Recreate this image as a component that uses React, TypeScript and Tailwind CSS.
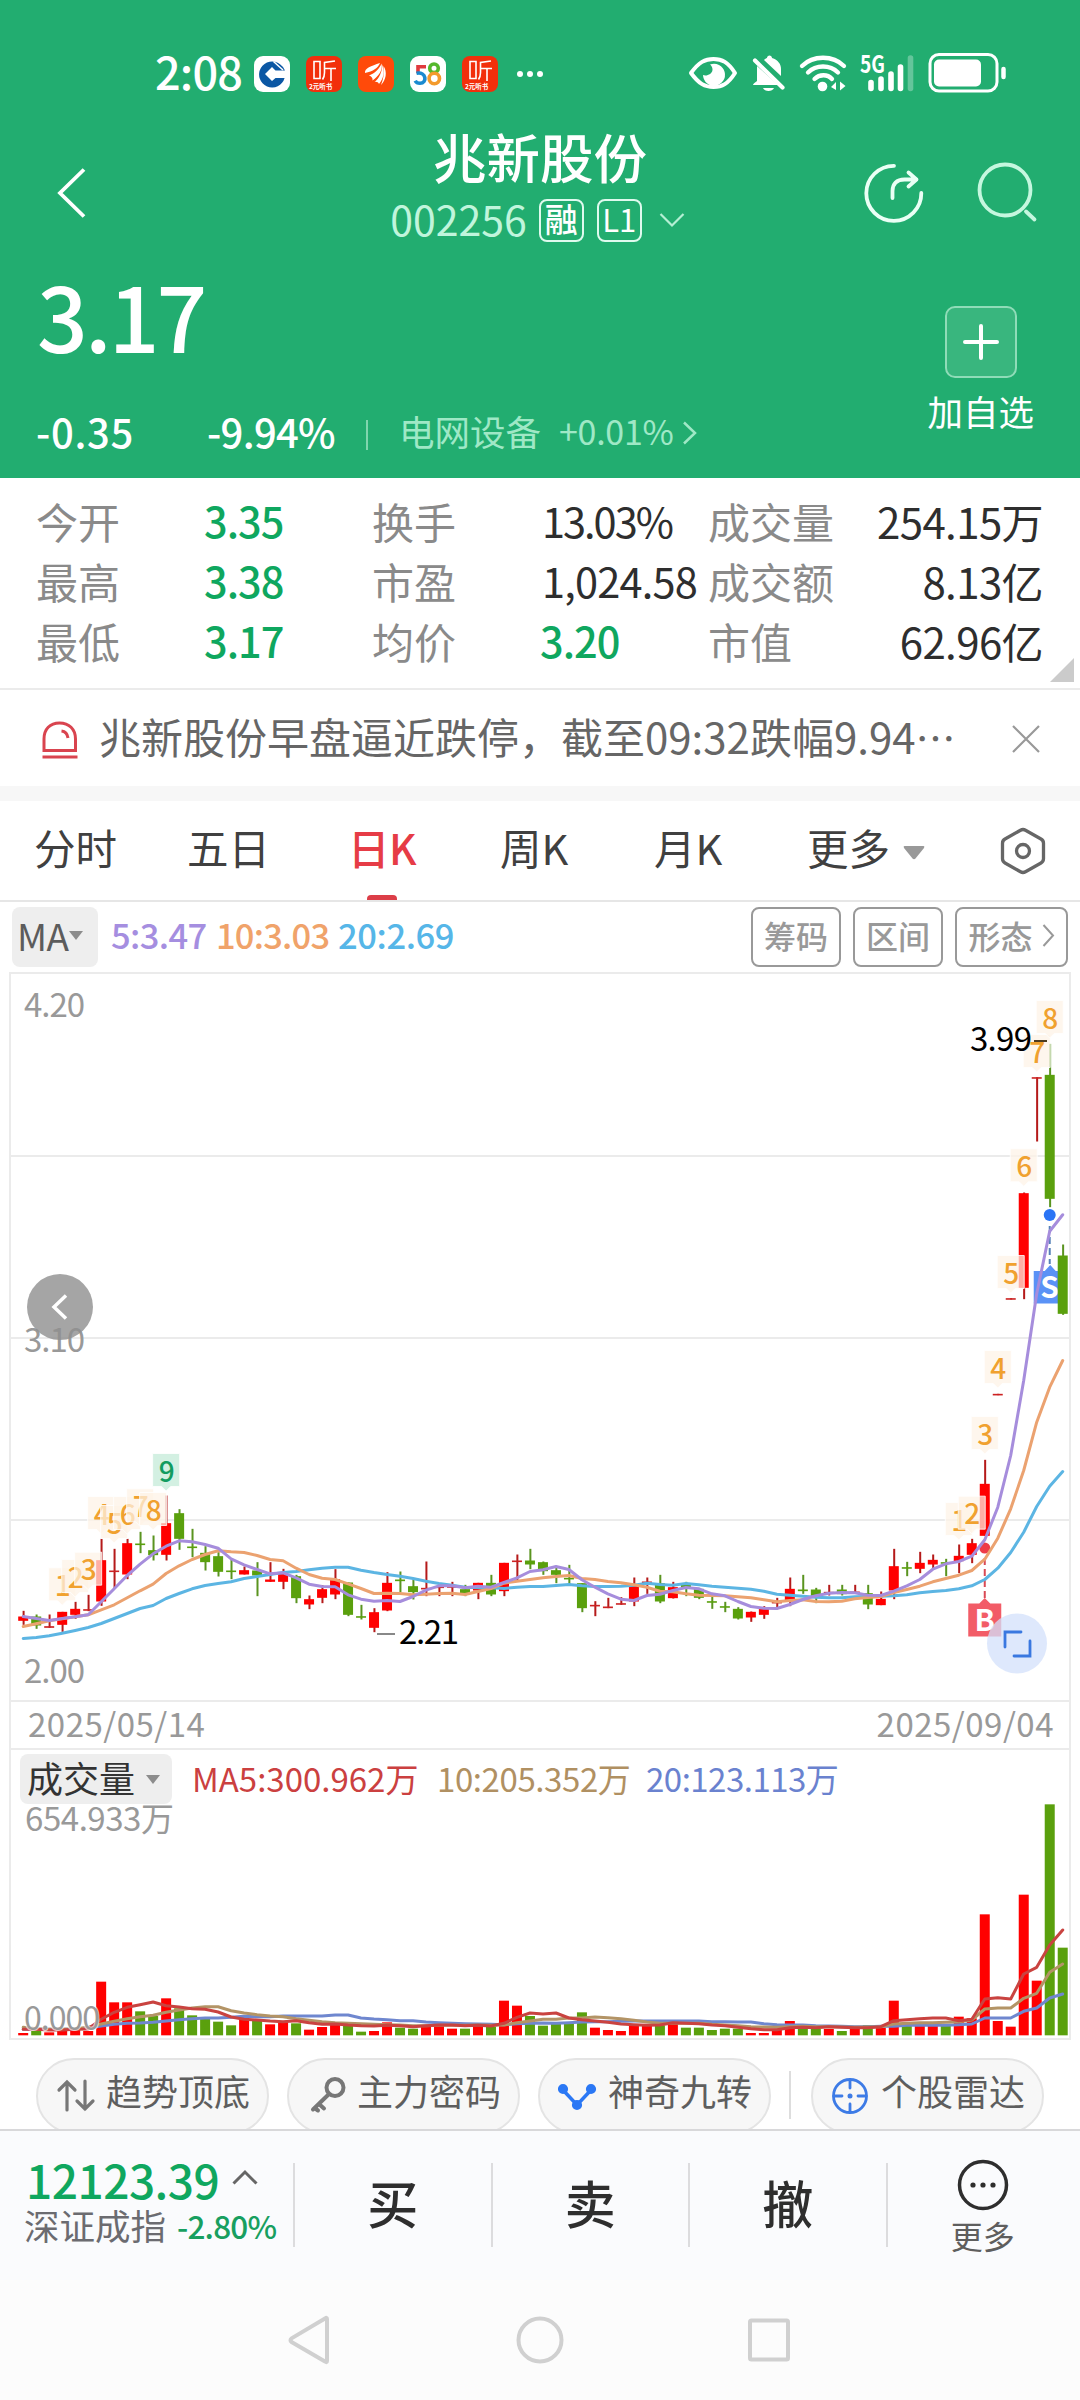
import type { ReactNode } from 'react';

const UP = '#ff0000';
const DOWN = '#5aa00d';
const STEP = 12.994;
const FIRST_X = 23.2;

const xAt = (i: number) => FIRST_X + i * STEP;
const priceY = (v: number) => 1380.5 + v / 3;
const volumeY = (v: number) => 1740 + v / 3;

// [up, high, low, body top, body bottom]
const candles: number[][] = [
  [1, 691, 733, 708, 721], [0, 702, 745, 708, 735], [1, 702, 742, 737, 742], [1, 694, 754, 694, 733],
  [1, 664, 715, 685, 703], [1, 643, 692, 686, 690], [1, 475, 676, 539, 663], [1, 505, 625, 570, 574],
  [1, 475, 596, 488, 582], [0, 454, 518, 489, 493], [0, 465, 540, 509, 524], [1, 345, 540, 428, 523],
  [0, 386, 508, 398, 475], [0, 445, 530, 498, 502], [0, 497, 570, 517, 545], [0, 515, 588, 527, 574],
  [0, 538, 596, 570, 574], [1, 558, 582, 569, 582], [0, 545, 647, 570, 585], [1, 545, 604, 597, 604],
  [1, 565, 626, 577, 604], [0, 583, 668, 587, 653], [1, 645, 686, 656, 672], [1, 614, 668, 626, 652],
  [1, 566, 656, 596, 642], [0, 606, 707, 606, 703], [0, 673, 717, 707, 711], [1, 683, 755, 695, 742],
  [1, 575, 692, 607, 690], [0, 573, 635, 597, 602], [0, 597, 657, 617, 635], [1, 543, 647, 622, 626],
  [1, 613, 647, 618, 621], [1, 604, 647, 617, 620], [0, 613, 647, 626, 638], [1, 607, 656, 607, 630],
  [0, 583, 647, 607, 642], [1, 547, 647, 547, 632], [1, 522, 604, 540, 544], [0, 505, 566, 540, 552],
  [0, 543, 583, 545, 572], [0, 558, 608, 569, 583], [0, 553, 612, 592, 596], [0, 608, 695, 608, 683],
  [1, 662, 707, 673, 677], [1, 652, 683, 678, 683], [1, 650, 673, 668, 672], [1, 591, 677, 614, 663],
  [1, 591, 640, 603, 608], [0, 583, 668, 608, 663], [1, 604, 654, 620, 653], [0, 604, 647, 612, 620],
  [0, 622, 656, 625, 652], [0, 645, 685, 662, 666], [0, 664, 695, 677, 681], [0, 680, 717, 685, 714],
  [1, 693, 724, 694, 711], [1, 677, 715, 681, 703], [1, 652, 684, 664, 667], [1, 591, 677, 625, 663],
  [0, 583, 640, 627, 632], [0, 622, 668, 627, 648], [1, 613, 645, 634, 638], [0, 613, 645, 627, 641],
  [1, 613, 640, 633, 637], [0, 613, 686, 638, 672], [1, 633, 674, 655, 674], [1, 505, 656, 557, 630],
  [0, 544, 587, 560, 564], [1, 514, 578, 547, 565], [1, 522, 563, 538, 552], [0, 535, 587, 545, 549],
  [1, 492, 578, 526, 542], [1, 475, 548, 488, 523], [1, 238, 466, 310, 466], [1, 40, 44, 40, 44],
  [1, -247, -243, -247, -243], [1, -564, -244, -562, -278], [1, -910, -717, -910, -906],
  [0, -1010, -520, -917, -545], [0, -408, -197, -375, -200],
];

const ma5 = [
  708, 714, 720, 714, 709, 703, 664, 625, 585, 551, 520, 497, 481, 484, 492, 503, 535, 553, 567, 580,
  577, 592, 611, 618, 619, 643, 656, 662, 660, 663, 648, 629, 616, 616, 622, 617, 620, 606, 592, 573,
  568, 558, 567, 598, 620, 640, 656, 660, 645, 641, 630, 621, 625, 640, 646, 663, 678, 683, 684, 672,
  657, 646, 638, 636, 637, 644, 645, 632, 616, 597, 566, 550, 543, 527, 478, 380, 225, 0, -260, -448, -497,
];
const ma10 = [
  738, 730, 721, 715, 709, 703, 688, 673, 652, 631, 611, 579, 556, 537, 522, 511, 514, 516, 525, 537,
  541, 563, 582, 593, 597, 610, 624, 639, 638, 639, 643, 641, 639, 638, 642, 633, 624, 608, 602, 597,
  592, 588, 585, 594, 597, 603, 607, 613, 620, 632, 634, 640, 644, 645, 646, 649, 652, 658, 664, 660,
  658, 663, 664, 662, 655, 651, 648, 636, 627, 617, 604, 594, 584, 570, 536, 473, 385, 270, 125, 20, -60,
];
const ma20 = [
  774, 771, 766, 758, 750, 741, 729, 714, 699, 684, 675, 654, 639, 625, 615, 609, 604, 594, 588, 582,
  576, 573, 568, 563, 560, 560, 569, 576, 582, 587, 594, 602, 609, 614, 620, 622, 622, 624, 620, 618,
  618, 615, 612, 616, 618, 618, 617, 614, 608, 612, 614, 609, 613, 617, 620, 623, 626, 632, 641, 644,
  647, 650, 652, 652, 649, 648, 647, 646, 643, 637, 633, 630, 625, 616, 597, 563, 516, 455, 378, 317, 273,
];

const volumes = [
  879, 873, 877, 870, 867, 873, 725, 787, 787, 814, 828, 775, 805, 826, 832, 845, 856, 840, 838, 853,
  847, 850, 869, 861, 852, 855, 875, 873, 847, 863, 866, 858, 856, 866, 866, 850, 860, 782, 797, 828,
  857, 848, 850, 817, 863, 870, 873, 852, 858, 856, 850, 863, 863, 870, 866, 866, 879, 879, 870, 843,
  866, 866, 867, 873, 867, 855, 863, 782, 855, 855, 853, 857, 830, 835, 523, 843, 860, 464, 722, 193, 623,
];
const vma5 = [
  868, 868, 870, 870, 868, 867, 838, 817, 802, 794, 786, 797, 801, 806, 808, 816, 831, 838, 840, 843,
  845, 842, 848, 853, 852, 855, 857, 858, 856, 857, 860, 857, 855, 855, 857, 856, 858, 850, 832, 819,
  822, 819, 834, 839, 843, 847, 852, 854, 856, 855, 848, 850, 851, 855, 857, 862, 866, 869, 869, 863,
  862, 863, 860, 862, 863, 863, 860, 842, 839, 836, 834, 834, 842, 838, 777, 773, 777, 702, 682, 615, 570,
];
const vma10 = [
  862, 866, 868, 868, 866, 862, 852, 844, 836, 830, 826, 817, 810, 804, 800, 800, 812, 819, 824, 828,
  830, 836, 841, 845, 848, 850, 851, 853, 854, 855, 857, 857, 856, 856, 856, 855, 856, 855, 848, 843,
  838, 838, 834, 834, 831, 833, 836, 841, 846, 850, 850, 850, 850, 853, 855, 857, 860, 861, 862, 860,
  859, 860, 860, 861, 862, 861, 860, 852, 850, 848, 848, 847, 845, 840, 807, 804, 804, 775, 760, 697, 672,
];
const vma20 = [
  868, 868, 868, 868, 867, 864, 858, 853, 850, 849, 847, 843, 839, 836, 834, 834, 832, 829, 830, 830,
  828, 828, 828, 828, 825, 825, 834, 837, 839, 842, 842, 846, 848, 850, 851, 852, 853, 854, 851, 850,
  849, 850, 848, 846, 845, 845, 844, 843, 843, 843, 843, 843, 843, 845, 845, 846, 846, 851, 854, 855,
  855, 857, 858, 859, 860, 860, 859, 859, 856, 856, 856, 856, 854, 852, 834, 834, 834, 814, 804, 774, 762,
];

// sequence marks: [candle index, top, digit]
const marks: number[][] = [
  [3, 562, 1], [4, 537, 2], [5, 515, 3], [6, 348, 4], [7, 375, 5], [8, 348, 6], [9, 325, 7], [10, 336, 8],
  [72, 366, 1], [73, 347, 2], [74, 108, 3], [75, -90, 4], [76, -375, 5], [77, -695, 6], [78, -1038, 7], [79, -1140, 8],
];

function Line({ data, y, color }: { data: number[]; y: (v: number) => number; color: string }) {
  const points = data.map((v, i) => `${xAt(i).toFixed(1)},${y(v).toFixed(1)}`).join(' ');
  return <polyline points={points} fill="none" stroke={color} strokeWidth="3" strokeLinejoin="round" strokeLinecap="round" />;
}

function Candle({ row, i }: { row: number[]; i: number }) {
  const [up, high, low, top, bottom] = row;
  const x = xAt(i);
  const thin = bottom - top <= 6;
  return (
    <g>
      <rect x={x - 0.6} y={priceY(high)} width="2" height={(low - high) / 3} fill={up ? '#b51a1a' : '#5a9420'} />
      <rect
        x={x - 5}
        y={priceY(top)}
        width="10"
        height={Math.max((bottom - top) / 3, 1.6)}
        fill={up ? (thin ? '#cc2222' : UP) : DOWN}
      />
    </g>
  );
}

function Mark({ x, y, label, green }: { x: number; y: number; label: number; green?: boolean }) {
  return (
    <g>
      <path
        d={`M${x - 13.5} ${y}h27v33h-9l-4.5 4.5l-4.5 -4.5h-9z`}
        fill={green ? '#d3f0e2' : '#fef3e6'}
        fillOpacity={green ? 1 : 0.72}
        stroke="#fff"
        strokeWidth="1"
        strokeOpacity="0.8"
      />
      <text x={x + 0.5} y={y + 28} fontSize="28" fontWeight="500" textAnchor="middle" fill={green ? '#129c60' : '#f0a12f'}>
        {label}
      </text>
    </g>
  );
}

function StatusBar() {
  return (
    <div className="flex h-[104px] items-start pt-[50px]">
      <span className="ml-[155px] mt-[-2px] w-[99px] text-[45px] font-medium leading-[46px] tracking-[-0.8px]">2:08</span>
      <div className="mt-[6px] flex items-center gap-4">
        <svg width="36" height="36" viewBox="0 0 36 36">
          <rect width="36" height="36" rx="9" fill="#fff" />
          <path d="M26 8.200A13 13 0 1 0 30.600 22H21.500l-3.500 3-7-7 7-7 3.500 3.500H31A13 13 0 0 0 26 8.200z" fill="#0b57a4" />
          <path d="M19.500 5.500l9.500 8.500" stroke="#fff" strokeWidth="1.500" />
        </svg>
        <ListenIcon />
        <svg width="36" height="36" viewBox="0 0 36 36">
          <rect width="36" height="36" rx="8" fill="#ff4a0a" />
          <path
            d="M7 17C6.500 12 13 10 22 7c-2 5-7 8.500-15 10zM11 19.500c6-2.500 10-6 12.500-12C25 14 21 20 14.500 24.500 15 22 13.500 20.500 11 19.500zM16.500 26c5-4 7.500-10 8-17.500 2 7 1.500 14-3.500 19.500-.5-1.500-2.500-2.500-4.500-2zM23 29c2-5 3.500-11 2.500-19 4 6 2.500 14-2.500 19z"
            fill="#fff"
          />
        </svg>
        <svg width="36" height="36" viewBox="0 0 36 36" fill="none" strokeWidth="3.600">
          <rect width="36" height="36" rx="9" fill="#fff" />
          <path d="M16 10.800H8v6.500" stroke="#e03a3e" />
          <path d="M6.500 17.300c10-2 11 10 3.500 10-2.500 0-4-1-4.800-2.600" stroke="#1a8ad0" />
          <circle cx="24" cy="12.300" r="4.300" stroke="#54b82c" />
          <circle cx="24.300" cy="22.500" r="5.200" stroke="#f39a2b" />
        </svg>
        <ListenIcon />
      </div>
      <div className="ml-[19px] mt-[21px] flex gap-1">
        <i className="size-[6px] rounded-full bg-white" />
        <i className="size-[6px] rounded-full bg-white" />
        <i className="size-[6px] rounded-full bg-white" />
      </div>
      <svg className="ml-[144px] overflow-visible" width="324" height="46" viewBox="687 50 324 46" fill="none" stroke="#fff" strokeLinecap="round">
        <path d="M691 73C699 62 705 59 713.500 59S728 62 735 73C728 84 722 87 713.500 87S699 84 691 73z" strokeWidth="4" strokeLinejoin="round" />
        <path d="M710 64.500a11 11 0 1 1-7 10.500c3 1.500 9.500-.5 9.500-5.500 0-2-1-4-2.500-5z" fill="#fff" stroke="none" />
        <path d="M757 66L778 85H753c0-1.500 2.500-2.500 4-4zM764 60c1-1 2-2 3-2 0-3.500 5-3.500 5 0 6 2 9 6 9 11v7zM763 88h11c-1.500 4-9.500 4-11 0z" fill="#fff" stroke="none" />
        <path d="M755 60.500L782.500 87.500" strokeWidth="4.200" />
        <path d="M802 66c11-11 31-11 42 0M808 72.500c8-8 22-8 30 0M814.500 79c5-5 13-5 17.500 0" strokeWidth="4.300" />
        <circle cx="822.500" cy="86.500" r="4.800" fill="#fff" stroke="none" />
        <path d="M831 87l5-5v8zM840 81.500v9l5.500-4.500z" fill="#fff" stroke="none" />
        <text x="860" y="73" fontSize="24" fontWeight="700" fill="#fff" stroke="none" textLength="25" lengthAdjust="spacingAndGlyphs">5G</text>
        <path d="M871 82.500v6M881 79v9.500M891 74v14.500M900.500 67v21.500" strokeWidth="5.600" />
        <path d="M910.500 58v30.500" strokeWidth="5.600" strokeOpacity="0.3" />
        <rect x="930" y="54.500" width="67" height="36.500" rx="9" strokeWidth="3" />
        <rect x="934" y="59.500" width="47" height="27" rx="5" fill="#fff" stroke="none" />
        <path d="M1003.500 69v8" strokeWidth="4.500" />
      </svg>
    </div>
  );
}

function ListenIcon() {
  return (
    <svg width="36" height="36" viewBox="0 0 36 36">
      <rect width="36" height="36" rx="8" fill="#f22f0b" />
      <path d="M8 5.500h6v17H8zM29 5l-10.500 1.500v10c0 3-.5 5-2 7M18.500 12.500H30M25 12.500V25" fill="none" stroke="#fff" strokeWidth="1.600" />
      <text x="3" y="33" fontSize="6.500" fontWeight="700" fill="#fff">2元听书</text>
    </svg>
  );
}

function Header() {
  return (
    <header className="h-[478px] bg-[#22ad70] text-white">
      <StatusBar />
      <div className="grid h-[146px] grid-cols-[1fr_auto_1fr]">
        <svg className="ml-[54px] mt-[61px]" width="36" height="56" viewBox="0 0 36 56" fill="none" stroke="#fff" strokeWidth="3.800">
          <path d="M30 4.500L6 28l24 23.500" />
        </svg>
        <div className="flex flex-col items-center">
          <h1 className="mt-[25px] text-[53.5px] font-medium leading-[54px]">兆新股份</h1>
          <div className="mt-[15px] mr-[5px] flex h-[44px] items-center text-[#c0f5dc]">
            <span className="mt-[-4px] text-[41px] leading-[42px]">002256</span>
            <span className="ml-[12px] flex h-[43px] w-[45px] items-center justify-center rounded-lg border-2 border-[#dffaee] pb-1 text-[33px] font-medium leading-none text-white">融</span>
            <span className="ml-[13px] flex h-[43px] w-[45px] items-center justify-center rounded-lg border-2 border-[#dffaee] pb-1 text-[31px] leading-none text-white">L1</span>
            <svg className="ml-[17px]" width="26" height="18" viewBox="0 0 26 18" fill="none" stroke="#b5efd4" strokeWidth="2.200">
              <path d="M1.500 3L13 14.500 24.500 3" />
            </svg>
          </div>
        </div>
        <div className="flex justify-end">
          <svg className="mt-[55px]" width="220" height="66" viewBox="860 159 220 66" fill="none" stroke="#eafff5" strokeWidth="3.800" strokeLinecap="round" strokeLinejoin="round">
            <path d="M894 165.800A27.500 27.500 0 1 0 921.300 193" />
            <path d="M892.500 198v-7c0-7 4-11.500 12-11.500h12M908.500 172.500l8 7-8 7" />
            <g stroke="#c5f7df">
              <circle cx="1005" cy="190" r="25.500" />
              <path d="M1026 211.500l8.500 8" />
            </g>
          </svg>
        </div>
      </div>
      <div className="flex h-[228px] justify-between">
        <div className="pl-9">
          <div className="ml-px mt-[19px] text-[89px] font-medium leading-[91px] tracking-[-2.8px]">3.17</div>
          <div className="mt-[50px] flex h-[42px] items-center text-[40px] font-medium leading-none">
            <span className="w-[171px] tracking-[0.7px]">-0.35</span>
            <span className="w-[159px] tracking-[-0.7px]">-9.94%</span>
            <i className="mt-2 h-[30px] w-[2px] bg-[#7fd6ae]" />
            <span className="ml-[31px] text-[35.5px] font-normal text-[#9fe8c6]">电网设备</span>
            <span className="ml-[18px] text-[34px] font-normal tracking-[-0.3px] text-[#9fe8c6]">+0.01%</span>
            <svg className="ml-[9px] mt-1" width="16" height="24" viewBox="0 0 16 24" fill="none" stroke="#9fe8c6" strokeWidth="2.500">
              <path d="M2 1.500L13 12 2 22.500" />
            </svg>
          </div>
        </div>
        <div className="mr-[46px] mt-[56px] flex flex-col items-center">
          <span className="flex size-[72px] items-center justify-center rounded-[10px] border-2 border-[#8fdcb8] bg-[#39b67e]">
            <svg width="36" height="36" viewBox="0 0 36 36" stroke="#fff" strokeWidth="4" strokeLinecap="round">
              <path d="M18 2v32M2 18h32" />
            </svg>
          </span>
          <span className="mt-[15px] text-[35.5px] leading-[36px]">加自选</span>
        </div>
      </div>
    </header>
  );
}

const stats = [
  ['今开', '3.35', '换手', '13.03%', '成交量', '254.15万'],
  ['最高', '3.38', '市盈', '1,024.58', '成交额', '8.13亿'],
  ['最低', '3.17', '均价', '3.20', '市值', '62.96亿'],
];

function Stats() {
  return (
    <section className="relative h-[212px] border-b-2 border-[#ebebeb] bg-white pt-[13px]">
      {stats.map((row, i) => (
        <div key={row[0]} className="flex h-[60px] items-center pl-[36px] pr-[37px] text-[42px] leading-none text-[#8a8a8a]">
          <span className="w-[168px]">{row[0]}</span>
          <span className="w-[168px] text-[41.5px] font-medium tracking-[-1px] text-[#0fa75f]">{row[1]}</span>
          <span className="w-[168px]">{row[2]}</span>
          {i === 2 && <span className="w-[168px] text-[41.5px] font-medium tracking-[-1px] text-[#0fa75f]">{row[3]}</span>}
          {i === 1 && <span className="w-[168px] whitespace-nowrap pl-[2px] text-[41.5px] tracking-[-0.8px] text-[#2e2e2e]">{row[3]}</span>}
          {i === 0 && <span className="w-[168px] whitespace-nowrap pl-[2px] text-[41.5px] tracking-[-2px] text-[#2e2e2e]">{row[3]}</span>}
          <span>{row[4]}</span>
          <span className="ml-auto tracking-[-0.6px] text-[#2e2e2e]">{row[5]}</span>
        </div>
      ))}
      <svg className="absolute bottom-[6px] right-[6px]" width="24" height="24" viewBox="0 0 24 24">
        <path d="M24 0v24H0z" fill="#cbcbcb" />
      </svg>
    </section>
  );
}

function Alert() {
  return (
    <section className="flex h-[96px] items-center bg-white text-[#666]">
      <svg className="ml-[41px] mt-1" width="38" height="40" viewBox="0 0 38 40" fill="none" stroke="#d9444f" strokeWidth="3">
        <path d="M3 30.500V19C3 9 9 3 18.500 3S34.500 9 34.500 19v11.500z" />
        <path d="M20.500 11c4 .5 6 3 6.500 7M1.500 37h35" />
      </svg>
      <span className="ml-[20px] mt-[-4px] w-[880px] whitespace-nowrap text-[42px] leading-[50px]">
        兆新股份早盘逼近跌停，截至09:32跌幅9.94
        <span className="text-[40px]">⋯</span>
      </span>
      <svg className="ml-auto mr-[40px] mt-[2px]" width="28" height="28" viewBox="0 0 28 28" stroke="#999" strokeWidth="2.200">
        <path d="M1 1l26 26M27 1L1 27" />
      </svg>
    </section>
  );
}

function Tabs() {
  return (
    <nav className="flex h-[101px] items-center border-b-2 border-[#e6e6e6] bg-white pl-[34px] text-[41.5px] leading-none text-[#404040]">
      <span className="w-[153px] pb-[5px]">分时</span>
      <span className="w-[161px] pb-[5px]">五日</span>
      <span className="relative flex h-full w-[152px] items-center pb-[5px] font-medium tracking-[-0.5px] text-[#e63c46]">
        日K
        <i className="absolute bottom-0 left-[19px] h-[5px] w-[30px] rounded-t bg-[#dc3e48]" />
      </span>
      <span className="w-[154px] pb-[5px]">周K</span>
      <span className="w-[153px] pb-[5px]">月K</span>
      <span className="pb-[5px]">更多</span>
      <svg className="ml-[13px] mt-1" width="22" height="14" viewBox="0 0 22 14">
        <path d="M1.500 0h19Q22 0 21 2l-8.500 10.500q-1.500 1.500-3 0L1 2Q0 0 1.500 0z" fill="#999" />
      </svg>
      <svg className="ml-auto mr-[34px]" width="46" height="48" viewBox="0 0 46 48" fill="none" stroke="#666" strokeWidth="3.300" strokeLinejoin="round">
        <path d="M20.500 3.200q2.500-1.400 5 0L41 12q2.500 1.400 2.500 4.200v15.600q0 2.800-2.500 4.200l-15.500 8.800q-2.500 1.400-5 0L5 36q-2.500-1.400-2.500-4.200V16.200Q2.500 13.400 5 12z" />
        <circle cx="23" cy="24" r="6.500" />
      </svg>
    </nav>
  );
}

function OutlineButton({ children, wide }: { children: ReactNode; wide?: boolean }) {
  return (
    <span className={`flex h-[60px] items-center justify-center rounded-lg border-2 border-[#999] pb-[4px] text-[32px] leading-none text-[#999] ${wide ? 'w-[113px]' : 'w-[90px]'}`}>
      {children}
    </span>
  );
}

function MaRow() {
  return (
    <div className="flex h-[70px] items-center bg-white px-3 text-[34.5px] font-medium leading-none">
      <span className="flex h-[60px] w-[86px] items-center rounded-lg bg-[#eee] pb-[4px] pl-[5px] text-[37px] font-normal tracking-[-0.5px] text-[#5c5c5c]">
        MA
        <svg width="14" height="9" viewBox="0 0 14 9">
          <path d="M0 0h14L7 9z" fill="#8c8c8c" />
        </svg>
      </span>
      <span className="ml-[13px] w-[105px] pb-[5px] tracking-[-0.6px] text-[#a58ee0]">5:3.47</span>
      <span className="w-[122px] pb-[5px] tracking-[-0.8px] text-[#f0a36a]">10:3.03</span>
      <span className="pb-[5px] tracking-[-0.4px] text-[#56b6e8]">20:2.69</span>
      <div className="ml-auto flex gap-3">
        <OutlineButton>筹码</OutlineButton>
        <OutlineButton>区间</OutlineButton>
        <OutlineButton wide>
          形态
          <svg className="ml-[9px]" width="13" height="23" viewBox="0 0 13 23" fill="none" stroke="#999" strokeWidth="2">
            <path d="M1.500 1L11 11.500 1.500 22" />
          </svg>
        </OutlineButton>
      </div>
    </div>
  );
}

function PriceChart() {
  const bx = xAt(74);
  const sx = xAt(79);
  return (
    <svg className="block" width="1058" height="726" viewBox="11 974 1058 726">
      {[1156, 1338, 1520].map((y) => (
        <path key={y} d={`M11 ${y}h1058`} stroke="#ebebeb" strokeWidth="2" />
      ))}
      <g fill="#999" fontSize="33">
        <text x="24" y="1017" textLength="61">4.20</text>
        <text x="24" y="1352" textLength="61">3.10</text>
        <text x="24" y="1683" textLength="61">2.00</text>
      </g>
      {candles.slice(0, 79).map((row, i) => (
        <Candle key={i} row={row} i={i} />
      ))}
      <path d={`M${bx} 1558v40`} stroke="#d94a55" strokeWidth="2" strokeDasharray="7 4" />
      <path d={`M${bx - 16.5} 1603.5h11l5.5 -5.5l5.5 5.5h11v33h-33z`} fill="#f25c67" />
      <text x={bx} y="1631" fontSize="30" fontWeight="700" fill="#fff" textAnchor="middle">B</text>
      <circle cx={bx} cy="1548" r="5.500" fill="#ee3b48" />
      <path d={`M${sx} 1226v38`} stroke="#5580b8" strokeWidth="2" strokeDasharray="7 4" />
      <path d={`M${sx - 16} 1271h11l5.5 -6l5.5 6h11v32.5h-33z`} fill="#5a92f6" />
      <text x={sx} y="1298" fontSize="30" fontWeight="700" fill="#fff" textAnchor="middle">S</text>
      <Candle row={candles[79]} i={79} />
      <Candle row={candles[80]} i={80} />
      <circle cx={sx} cy="1215" r="6" fill="#2a74f5" />
      <Line data={ma20} y={priceY} color="#5cb5e3" />
      <Line data={ma10} y={priceY} color="#eba270" />
      <Line data={ma5} y={priceY} color="#a68ddc" />
      {marks.map(([i, top, n]) => (
        <Mark key={i} x={xAt(i)} y={priceY(top)} label={n} />
      ))}
      <Mark x={xAt(11)} y={priceY(219)} label={9} green />
      <g fontSize="33">
        <path d="M377 1634h18" stroke="#888" strokeWidth="2" />
        <text x="399" y="1644" textLength="60">2.21</text>
        <path d="M1034 1041h13" stroke="#4d3b20" strokeWidth="2" />
        <text x="970" y="1051" textLength="62">3.99</text>
      </g>
      <circle cx="60" cy="1307" r="33" fill="#8f8f8f" fillOpacity="0.8" />
      <path d="M66 1295.500l-12 11.500 12 11.500" fill="none" stroke="#fff" strokeWidth="3.500" />
      <circle cx="1017" cy="1643.500" r="30" fill="#d3e0fb" fillOpacity="0.75" />
      <path d="M1005 1647v-15h16M1030 1641v15h-16" fill="none" stroke="#3a78e0" strokeWidth="2.800" strokeLinecap="round" />
    </svg>
  );
}

function VolumeChart() {
  return (
    <svg className="block overflow-visible" width="1058" height="234" viewBox="11 1804 1058 234">
      {volumes.map((v, i) => (
        <rect key={i} x={xAt(i) - 5} y={volumeY(v)} width="10" height={(886 - v) / 3} fill={candles[i][0] ? UP : DOWN} />
      ))}
      <Line data={vma20} y={volumeY} color="#6f87cf" />
      <Line data={vma10} y={volumeY} color="#b39466" />
      <Line data={vma5} y={volumeY} color="#c94340" />
      <text x="25" y="1831" fontSize="33" fill="#999" textLength="149">654.933万</text>
      <text x="24" y="2030" fontSize="32" fill="#999" stroke="#fff" strokeWidth="2" strokeOpacity="0.7" paintOrder="stroke" textLength="76">
        0.000
      </text>
    </svg>
  );
}

function Charts() {
  return (
    <section className="mx-[9px] w-[1062px] border-2 border-[#ebebeb] bg-white">
      <PriceChart />
      <div className="flex h-[50px] items-center justify-between border-y-2 border-[#ebebeb] pb-1 pl-[17px] pr-[15px] text-[33px] leading-none tracking-[0.5px] text-[#999]">
        <span>2025/05/14</span>
        <span>2025/09/04</span>
      </div>
      <div className="flex h-[54px] items-end pl-[9px] text-[33px] leading-none">
        <span className="flex h-[50px] w-[152px] items-center rounded-lg bg-[#eee] pb-[4px] pl-[7px] text-[36px] text-[#333]">
          成交量
          <svg className="ml-[11px] mt-1" width="14" height="9" viewBox="0 0 14 9">
            <path d="M0 0h14L7 9z" fill="#8c8c8c" />
          </svg>
        </span>
        <span className="ml-[20px] w-[245px] whitespace-nowrap pb-[9px] text-[#cb4040]">MA5:300.962万</span>
        <span className="w-[209px] whitespace-nowrap pb-[9px] tracking-[-0.4px] text-[#b09062]">10:205.352万</span>
        <span className="whitespace-nowrap pb-[9px] tracking-[-0.5px] text-[#6a82cf]">20:123.113万</span>
      </div>
      <VolumeChart />
    </section>
  );
}

function Chip({ icon, label }: { icon: ReactNode; label: string }) {
  return (
    <span className="flex h-[76px] w-[233px] items-center rounded-full border-2 border-[#e4e4e4] bg-[#f7f7f7] pl-[18px] text-[36px] leading-none text-[#5e5e5e]">
      <svg width="40" height="40" viewBox="0 0 40 40" fill="none" stroke="#777" strokeWidth="3.200" strokeLinecap="round">
        {icon}
      </svg>
      <span className="ml-[10px] pb-[12px]">{label}</span>
    </span>
  );
}

function Chips() {
  return (
    <div className="flex h-[89px] items-start overflow-hidden bg-white pl-[36px] pt-[18px]">
      <Chip label="趋势顶底" icon={<path d="M11 34V6M3 14l8-8 8 8M29 5v28M21 25l8 8 8-8" />} />
      <div className="ml-[18px]">
        <Chip
          label="主力密码"
          icon={
            <g strokeWidth="4">
              <circle cx="28" cy="11.500" r="8.500" />
              <path d="M21.500 18.500L6 33.500M12 28l5 4.500M7.500 32l3.500 2.500" />
            </g>
          }
        />
      </div>
      <div className="ml-[18px]">
        <Chip
          label="神奇九转"
          icon={
            <g stroke="#2b78f5" fill="#2b78f5">
              <path d="M5 14l14 15 14-15" fill="none" strokeWidth="3.500" />
              <circle cx="5" cy="13" r="3.500" />
              <circle cx="33" cy="13" r="3.500" />
              <circle cx="19" cy="29" r="3.500" />
            </g>
          }
        />
      </div>
      <i className="ml-[18px] mt-[13px] h-[48px] w-[2px] bg-[#ddd]" />
      <div className="ml-[20px]">
        <Chip
          label="个股雷达"
          icon={
            <g stroke="#3d7be6" strokeWidth="2.800">
              <circle cx="19" cy="20" r="16.500" />
              <path d="M19 4v8M19 28v8M3 20h8M27 20h8" />
              <circle cx="19" cy="20" r="2.500" fill="#3d7be6" stroke="none" />
            </g>
          }
        />
      </div>
    </div>
  );
}

function TradeBar() {
  return (
    <footer className="flex h-[151px] border-t-2 border-[#d8d8da] bg-[#fafbfd]">
      <div className="w-[293px] pl-[24px] pt-[23px]">
        <div className="flex h-[50px] items-center">
          <span className="ml-[2px] text-[46px] font-medium leading-none tracking-[-0.5px] text-[#0fa75f]">12123.39</span>
          <svg className="mb-[5px] ml-[13px]" width="26" height="16" viewBox="0 0 26 16" fill="none" stroke="#666" strokeWidth="3">
            <path d="M1.500 14.500L13 3l11.500 11.500" />
          </svg>
        </div>
        <div className="flex h-[42px] items-center whitespace-nowrap leading-none">
          <span className="text-[35.5px] text-[#6b6b70]">深证成指</span>
          <span className="ml-[11px] mt-[2px] text-[31.5px] font-medium tracking-[-0.8px] text-[#189f60]">-2.80%</span>
        </div>
      </div>
      {['买', '卖', '撤'].map((t) => (
        <div key={t} className="relative w-[197.5px] pt-[32px]">
          <i className="absolute left-0 top-[32px] h-[84px] w-[2px] bg-[#dcdcde]" />
          <div className="pl-[2px] pt-[14px] text-center text-[51px] font-medium leading-none text-[#2e2e2e]">{t}</div>
        </div>
      ))}
      <div className="relative flex flex-1 flex-col items-center pt-[28px]">
        <i className="absolute left-0 top-[32px] h-[84px] w-[2px] bg-[#dcdcde]" />
        <svg width="52" height="52" viewBox="0 0 52 52" fill="#2e2e2e">
          <circle cx="26" cy="26" r="23.500" fill="none" stroke="#2e2e2e" strokeWidth="3.500" />
          <circle cx="16" cy="26" r="2.600" />
          <circle cx="26" cy="26" r="2.600" />
          <circle cx="36" cy="26" r="2.600" />
        </svg>
        <span className="mt-[8px] text-[32px] leading-none text-[#5e5e5e]">更多</span>
      </div>
    </footer>
  );
}

function SystemNav() {
  return (
    <div className="flex h-[120px] justify-center bg-[#fcfcfc] pt-[35px]">
      <svg width="504" height="50" viewBox="288 2315 504 50" fill="none" stroke="#d0d0d0" strokeWidth="4" strokeLinejoin="round">
        <path d="M327 2319v42q0 2-2 .5L291.500 2342q-2-1.800 0-3.600L325 2318.500q2-1.500 2 .5z" />
        <circle cx="540" cy="2340" r="21.500" />
        <rect x="750" y="2320.500" width="38" height="39" rx="1.500" />
      </svg>
    </div>
  );
}

export default function App() {
  return (
    <main className="h-[2400px] w-[1080px] overflow-hidden bg-white font-['Noto_Sans_CJK_SC',sans-serif]" lang="zh-CN">
      <Header />
      <Stats />
      <Alert />
      <div className="h-[15px] bg-[#f7f7f7]" />
      <Tabs />
      <MaRow />
      <Charts />
      <Chips />
      <TradeBar />
      <SystemNav />
    </main>
  );
}
